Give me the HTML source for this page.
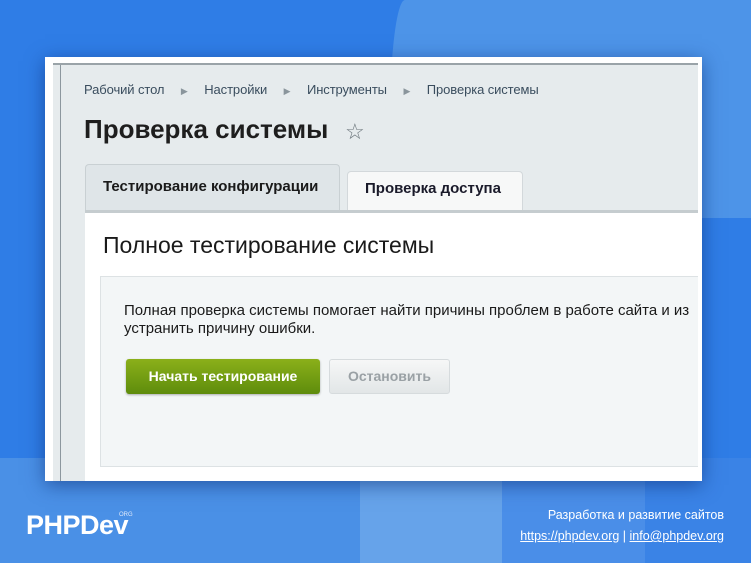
<!DOCTYPE html>
<html><head><meta charset="utf-8"><style>
*{margin:0;padding:0;box-sizing:border-box}
body{width:751px;height:563px;position:relative;overflow:hidden;background:#2f7de6;font-family:"Liberation Sans",Arial,sans-serif}
.a{position:absolute}
</style></head><body>
<div class="a" style="left:390px;top:0;width:361px;height:218px;background:#4d94e8;border-top-left-radius:15px 120px"></div>
<div class="a" style="left:0;top:458px;width:360px;height:105px;background:#4a90e6"></div>
<div class="a" style="left:360px;top:458px;width:142px;height:105px;background:#66a3ea"></div>
<div class="a" style="left:502px;top:458px;width:143px;height:105px;background:#4a8ee8"></div>
<div class="a" style="left:645px;top:458px;width:106px;height:105px;background:#3a83e6"></div>

<div class="a" style="left:45px;top:57px;width:657px;height:424px;background:#fff;box-shadow:0 4px 18px rgba(10,40,110,.55)">
  <div class="a" style="left:8px;top:6px;width:645px;height:418px;background:#e6ebed;border-top:2px solid #9aa3a8"></div>
  <div class="a" style="left:15px;top:8px;width:1px;height:416px;background:#8c979e"></div>
  <div class="a" style="left:39px;top:25px;font-size:13px;color:#3a4d5e;white-space:nowrap;letter-spacing:-.1px">Рабочий стол <span style="color:#8a959c;font-size:9px;margin:0 13px">▶</span> Настройки <span style="color:#8a959c;font-size:9px;margin:0 13px">▶</span> Инструменты <span style="color:#8a959c;font-size:9px;margin:0 13px">▶</span> Проверка системы</div>
  <div class="a" style="left:39px;top:57px;font-size:26px;font-weight:bold;color:#1e1e1e;white-space:nowrap">Проверка системы</div>
  <div class="a" style="left:300px;top:62px;font-size:22px;color:#6d777d">☆</div>
  <div class="a" style="left:40px;top:107px;width:255px;height:50px;background:#dfe5e8;border:1px solid #c9d0d3;border-bottom:none;border-radius:4px 4px 0 0"></div>
  <div class="a" style="left:58px;top:121px;font-size:15px;font-weight:bold;color:#1a1a1a;white-space:nowrap">Тестирование конфигурации</div>
  <div class="a" style="left:302px;top:114px;width:176px;height:40px;background:#f7f8f8;border:1px solid #d3d8db;border-bottom:none;border-radius:4px 4px 0 0"></div>
  <div class="a" style="left:320px;top:123px;font-size:15px;font-weight:bold;color:#1a1a2a;white-space:nowrap">Проверка доступа</div>
  <div class="a" style="left:40px;top:153px;width:613px;height:3px;background:#c5cccf"></div>
  <div class="a" style="left:40px;top:156px;width:613px;height:268px;background:#fff"></div>
  <div class="a" style="left:58px;top:175px;font-size:23px;color:#1a1a1a;white-space:nowrap">Полное тестирование системы</div>
  <div class="a" style="left:55px;top:219px;width:598px;height:191px;background:#f3f6f7;border:1px solid #dde2e4;border-right:none"></div>
  <div class="a" style="left:79px;top:245px;width:574px;overflow:hidden;font-size:15px;line-height:18px;color:#1a1a1a;white-space:nowrap">Полная проверка системы помогает найти причины проблем в работе сайта и из<br>устранить причину ошибки.</div>
  <div class="a" style="left:81px;top:302px;width:194px;height:35px;background:linear-gradient(#8bb01a,#5e8c0c);border-radius:3px;box-shadow:0 1px 2px rgba(0,0,0,.3);color:#fff;font-size:14px;font-weight:bold;text-align:center;line-height:35px">Начать тестирование</div>
  <div class="a" style="left:284px;top:302px;width:121px;height:35px;background:linear-gradient(#f6f7f7,#e2e6e7);border:1px solid #d6dbdd;border-radius:3px;color:#9aa1a5;font-size:14px;font-weight:bold;text-align:center;line-height:33px">Остановить</div>
</div>

<div class="a" style="left:26px;top:510px;font-size:27px;font-weight:bold;color:#fff;letter-spacing:-.5px">PHPDev</div>
<div class="a" style="left:119px;top:512px;font-size:6px;color:#dfe9fa">ORG</div>
<div class="a" style="right:27px;top:505px;font-size:12.5px;color:#fff;text-align:right;line-height:21px">Разработка и развитие сайтов<br><u>https://phpdev.org</u> | <u>info@phpdev.org</u></div>
</body></html>
